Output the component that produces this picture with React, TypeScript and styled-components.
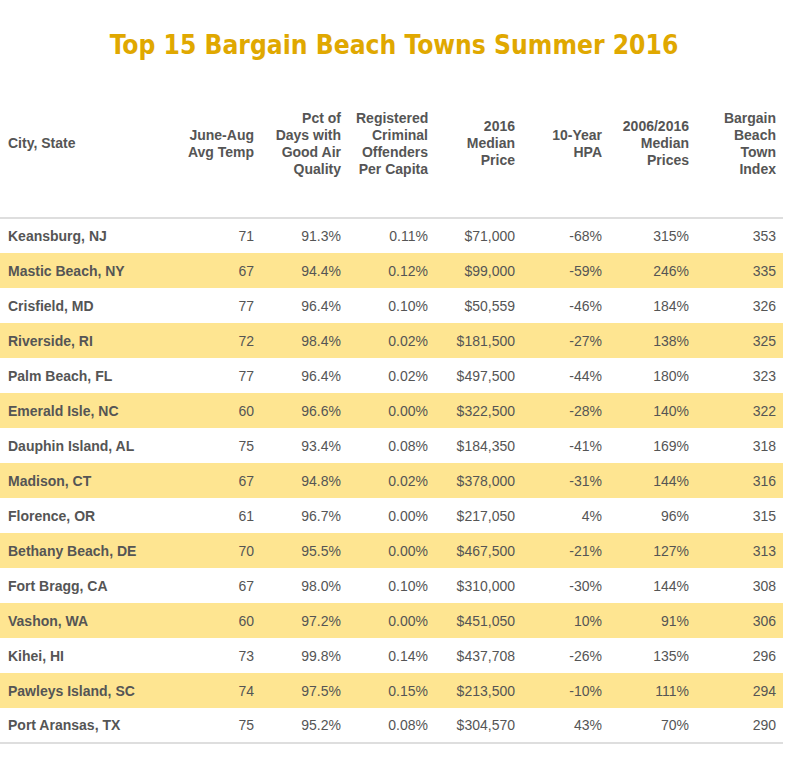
import React from "react";
import styled, { createGlobalStyle } from "styled-components";

const Global = createGlobalStyle`
  html, body { margin: 0; padding: 0; background: #fff; }
  body { font-family: "Liberation Sans", Arial, sans-serif; }
`;

const Page = styled.div`
  width: 788px;
  display: flex;
  flex-direction: column;
`;

const Title = styled.h1`
  margin: 0;
  height: 70px;
  display: flex;
  align-items: center;
  justify-content: center;
  padding-top: 20px;
  box-sizing: border-box;
  font-family: "DejaVu Sans", sans-serif;
  font-stretch: condensed;
  font-weight: bold;
  font-size: 26.2px;
  color: #e0a800;
`;

const Table = styled.table`
  width: 783px;
  border-collapse: collapse;
  table-layout: fixed;
  color: #555;
  font-size: 14px;
`;

const HeadCell = styled.th<{ $left?: boolean }>`
  height: 147px;
  padding: 0 7px 0 8px;
  text-align: ${(p) => (p.$left ? "left" : "right")};
  vertical-align: middle;
  font-weight: bold;
  line-height: 17px;
  border-bottom: 2px solid #dedede;
`;

const Row = styled.tr<{ $alt: boolean }>`
  background: ${(p) => (p.$alt ? "#fee591" : "#fff")};
  &:last-child td { border-bottom: 2px solid #dedede; }
`;

const Cell = styled.td<{ $city?: boolean }>`
  height: 35px;
  padding: 0 7px 0 8px;
  box-sizing: border-box;
  text-align: ${(p) => (p.$city ? "left" : "right")};
  font-weight: ${(p) => (p.$city ? "bold" : "normal")};
  vertical-align: middle;
  white-space: nowrap;
`;

const headers = [
  ["City, State"],
  ["June-Aug", "Avg Temp"],
  ["Pct of", "Days with", "Good Air", "Quality"],
  ["Registered", "Criminal", "Offenders", "Per Capita"],
  ["2016", "Median", "Price"],
  ["10-Year", "HPA"],
  ["2006/2016", "Median", "Prices"],
  ["Bargain", "Beach", "Town", "Index"],
];

const rows: string[][] = [
  ["Keansburg, NJ", "71", "91.3%", "0.11%", "$71,000", "-68%", "315%", "353"],
  ["Mastic Beach, NY", "67", "94.4%", "0.12%", "$99,000", "-59%", "246%", "335"],
  ["Crisfield, MD", "77", "96.4%", "0.10%", "$50,559", "-46%", "184%", "326"],
  ["Riverside, RI", "72", "98.4%", "0.02%", "$181,500", "-27%", "138%", "325"],
  ["Palm Beach, FL", "77", "96.4%", "0.02%", "$497,500", "-44%", "180%", "323"],
  ["Emerald Isle, NC", "60", "96.6%", "0.00%", "$322,500", "-28%", "140%", "322"],
  ["Dauphin Island, AL", "75", "93.4%", "0.08%", "$184,350", "-41%", "169%", "318"],
  ["Madison, CT", "67", "94.8%", "0.02%", "$378,000", "-31%", "144%", "316"],
  ["Florence, OR", "61", "96.7%", "0.00%", "$217,050", "4%", "96%", "315"],
  ["Bethany Beach, DE", "70", "95.5%", "0.00%", "$467,500", "-21%", "127%", "313"],
  ["Fort Bragg, CA", "67", "98.0%", "0.10%", "$310,000", "-30%", "144%", "308"],
  ["Vashon, WA", "60", "97.2%", "0.00%", "$451,050", "10%", "91%", "306"],
  ["Kihei, HI", "73", "99.8%", "0.14%", "$437,708", "-26%", "135%", "296"],
  ["Pawleys Island, SC", "74", "97.5%", "0.15%", "$213,500", "-10%", "111%", "294"],
  ["Port Aransas, TX", "75", "95.2%", "0.08%", "$304,570", "43%", "70%", "290"],
];

const widths = [174, 87, 87, 87, 87, 87, 87, 87];

export default function App() {
  return (
    <Page>
      <Global />
      <Title>Top 15 Bargain Beach Towns Summer 2016</Title>
      <Table>
        <colgroup>
          {widths.map((w, i) => (
            <col key={i} style={{ width: w }} />
          ))}
        </colgroup>
        <thead>
          <tr>
            {headers.map((h, i) => (
              <HeadCell key={i} $left={i === 0}>
                {h.map((line, j) => (
                  <React.Fragment key={j}>
                    {j > 0 && <br />}
                    {line}
                  </React.Fragment>
                ))}
              </HeadCell>
            ))}
          </tr>
        </thead>
        <tbody>
          {rows.map((r, i) => (
            <Row key={i} $alt={i % 2 === 1}>
              {r.map((v, j) => (
                <Cell key={j} $city={j === 0}>
                  {v}
                </Cell>
              ))}
            </Row>
          ))}
        </tbody>
      </Table>
    </Page>
  );
}
